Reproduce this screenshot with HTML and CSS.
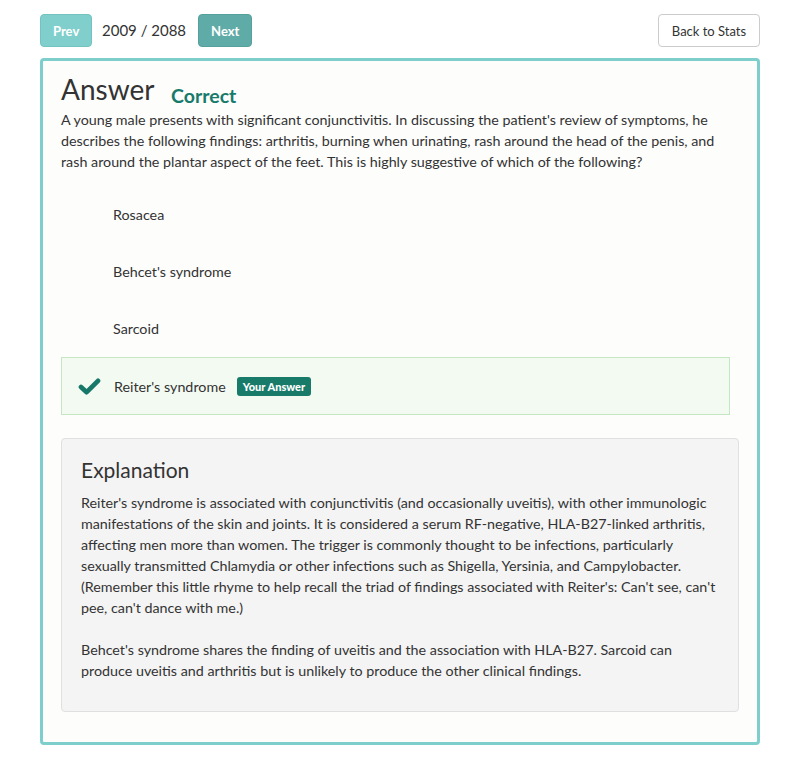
FILE: index.html
```html
<!DOCTYPE html>
<html>
<head>
<meta charset="utf-8">
<link rel="stylesheet" href="styles.css">
</head>
<body>
<div class="page">
  <div class="topbar">
    <div class="nav">
      <button class="btn btn-prev">Prev</button>
      <span class="counter">2009 / 2088</span>
      <button class="btn btn-next">Next</button>
    </div>
    <button class="btn btn-back">Back to Stats</button>
  </div>
  <div class="card">
    <div class="heading">
      <h1 class="title">Answer</h1>
      <span class="status">Correct</span>
    </div>
    <p class="question">A young male presents with significant conjunctivitis. In discussing the patient's review of symptoms, he describes the following findings: arthritis, burning when urinating, rash around the head of the penis, and rash around the plantar aspect of the feet. This is highly suggestive of which of the following?</p>
    <ul class="options">
      <li class="option">Rosacea</li>
      <li class="option">Behcet's syndrome</li>
      <li class="option">Sarcoid</li>
      <li class="option option-correct">
        <svg class="check" viewBox="0 0 24 18" width="23" height="17"><path d="M3 9.5 L9 15 L21 3" fill="none" stroke="#17786a" stroke-width="5" stroke-linecap="round" stroke-linejoin="round"/></svg>
        <span>Reiter's syndrome</span>
        <span class="badge">Your Answer</span>
      </li>
    </ul>
    <div class="explanation">
      <h2 class="exp-title">Explanation</h2>
      <p>Reiter's syndrome is associated with conjunctivitis (and occasionally uveitis), with other immunologic manifestations of the skin and joints. It is considered a serum RF-negative, HLA-B27-linked arthritis, affecting men more than women. The trigger is commonly thought to be infections, particularly sexually transmitted Chlamydia or other infections such as Shigella, Yersinia, and Campylobacter. (Remember this little rhyme to help recall the triad of findings associated with Reiter's: Can't see, can't pee, can't dance with me.)</p>
      <p>Behcet's syndrome shares the finding of uveitis and the association with HLA-B27. Sarcoid can produce uveitis and arthritis but is unlikely to produce the other clinical findings.</p>
    </div>
  </div>
</div>
</body>
</html>
```
FILE: styles.css
```css
* { box-sizing: border-box; }
html, body { margin: 0; padding: 0; background: #fff; }
body {
  font-family: "Lato", "Liberation Sans", sans-serif;
  font-size: 14.3px;
  line-height: 21px;
  color: #333;
}
.page {
  width: 720px;
  margin: 0 0 0 40px;
  padding-top: 14px;
}
.topbar {
  display: flex;
  justify-content: space-between;
  align-items: center;
  height: 33px;
}
.nav {
  display: flex;
  align-items: center;
}
.btn {
  font-family: inherit;
  font-size: 13px;
  height: 33px;
  border-radius: 4px;
  padding: 0 12px;
  cursor: pointer;
}
.btn-prev {
  width: 52px;
  background: #80cfcc;
  border: 1px solid #73c3c0;
  color: #fff;
  font-weight: bold;
}
.btn-next {
  width: 54px;
  background: #5faba7;
  border: 1px solid #56a09c;
  color: #fff;
  font-weight: bold;
}
.counter {
  font-size: 15px;
  margin: 0 12px 0 10px;
  color: #333;
}
.btn-back {
  width: 102px;
  background: #fff;
  border: 1px solid #ccc;
  color: #333;
  padding: 0;
}
.card {
  margin-top: 11px;
  border: 3px solid #7ecfcc;
  border-radius: 4px;
  background: #fdfdfc;
  padding: 10px 18px 30px 18px;
  height: 687px;
}
.heading {
  height: 36px;
  line-height: 36px;
}
.title {
  display: inline;
  margin: 0;
  font-size: 28px;
  font-weight: normal;
  color: #333;
}
.status {
  display: inline-block;
  margin-left: 13px;
  font-size: 19.5px;
  font-weight: bold;
  color: #177a6a;
  vertical-align: -3px;
}
.question {
  margin: 2px 0 0 0;
}
.options {
  list-style: none;
  margin: 14px 0 0 0;
  padding: 0;
}
.option {
  display: flex;
  align-items: center;
  height: 57px;
  padding-left: 52px;
}
.option-correct {
  height: 58px;
  padding-left: 16px;
  background: #f3faf2;
  border: 1px solid #c4e6c0;
  margin-right: 9px;
}
.check {
  margin-right: 13px;
  flex: none;
}
.badge {
  margin-left: 11px;
  background: #187a69;
  color: #fff;
  font-size: 11px;
  font-weight: 900;
  line-height: 19px;
  padding: 0 6px;
  border-radius: 3px;
}
.explanation {
  margin-top: 23px;
  background: #f4f4f4;
  border: 1px solid #e0e0e0;
  border-radius: 4px;
  padding: 16px 19px 20px 19px;
  height: 274px;
}
.exp-title {
  margin: 0 0 7px 0;
  font-size: 21px;
  font-weight: normal;
  line-height: 30px;
  color: #333;
}
.explanation p {
  margin: 0 0 21px 0;
}
```
